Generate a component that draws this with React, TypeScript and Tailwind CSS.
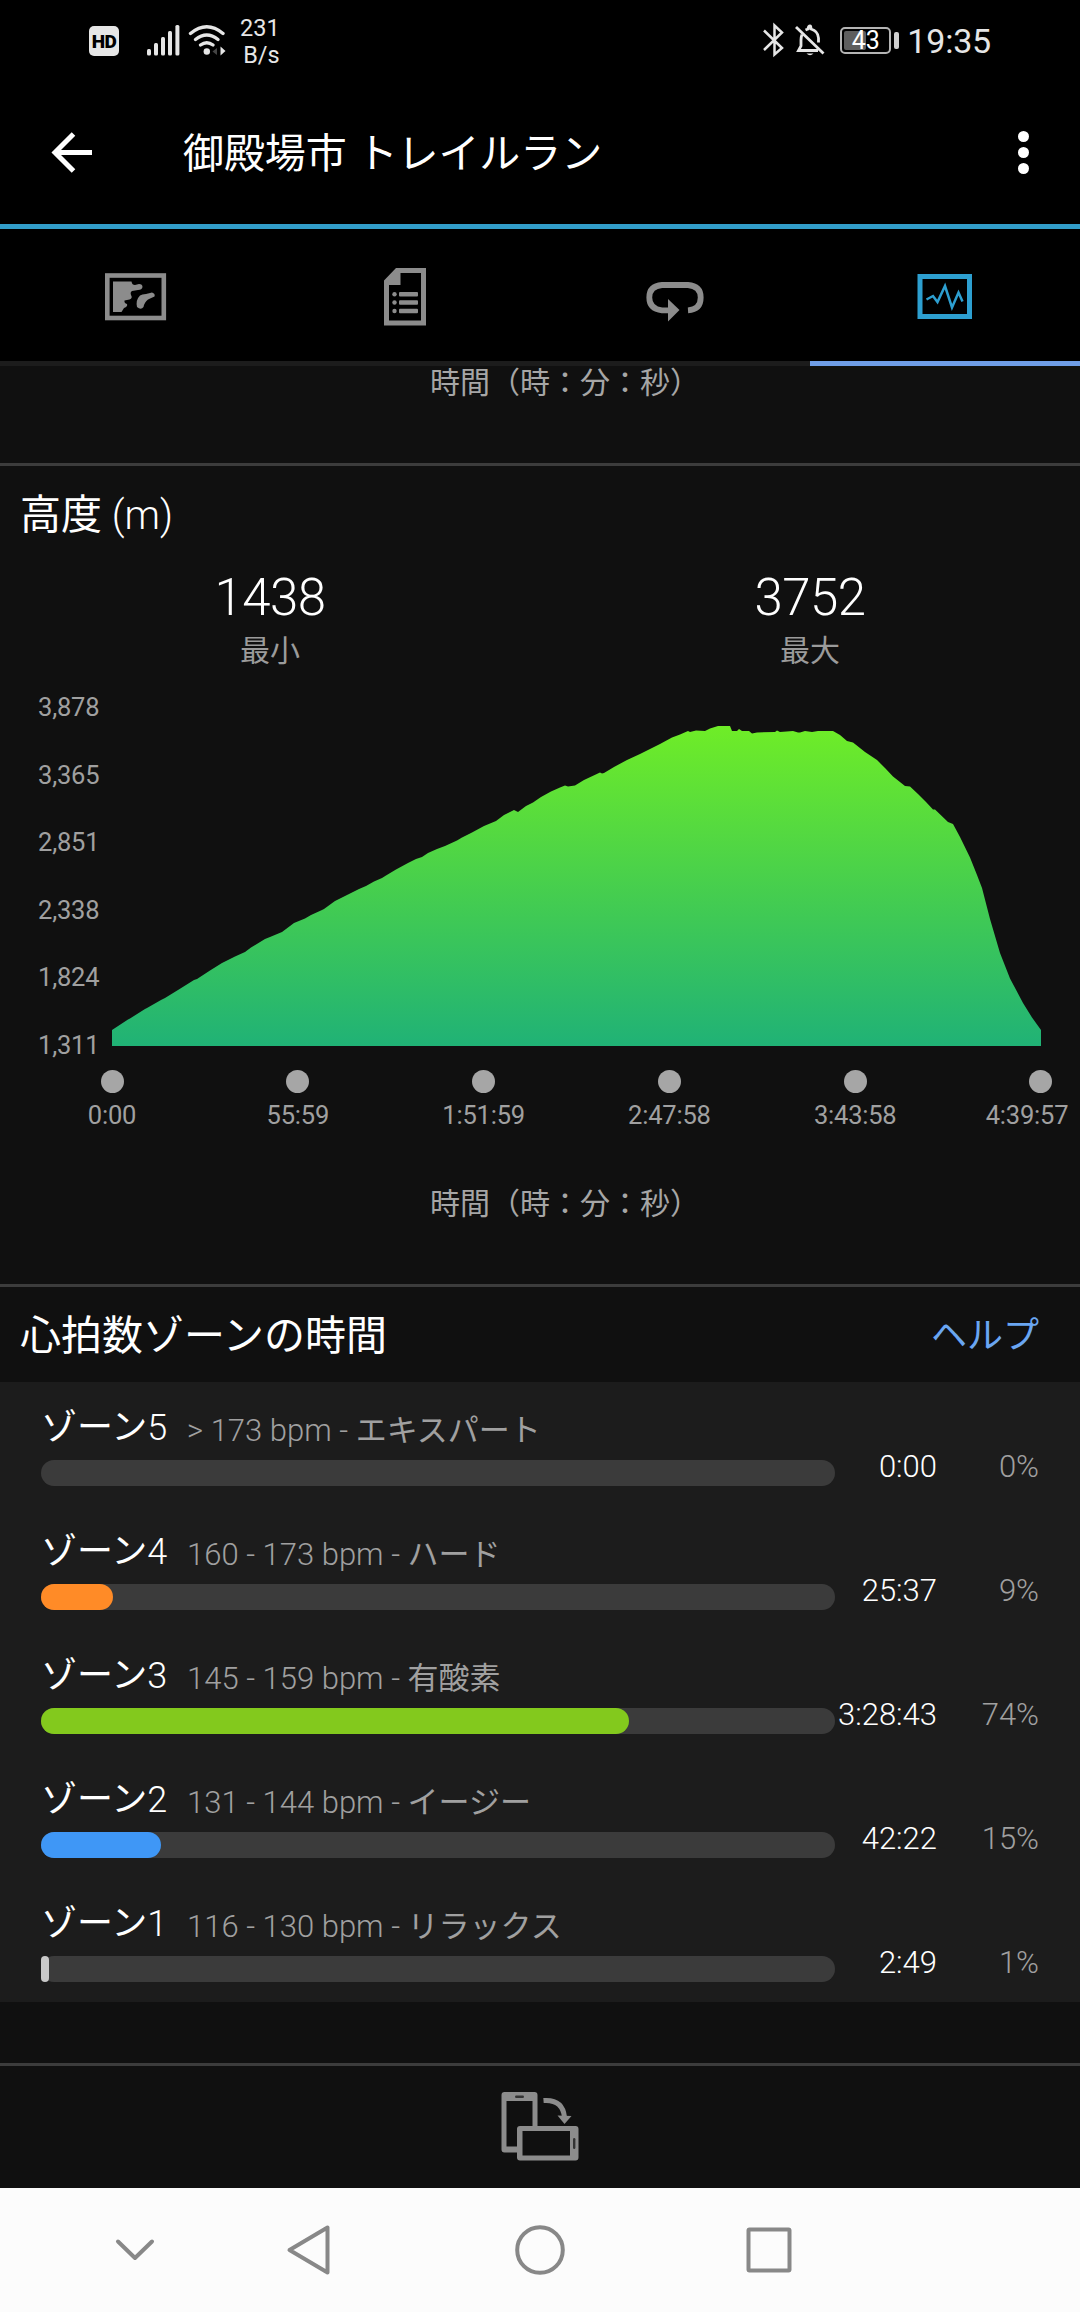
import React from 'react';

const ELEVATION_POINTS = [
  [112, 1030], [128, 1019.5], [130, 1018.5], [145, 1009], [147, 1008], [161, 1000], [165, 998], [178, 990], [194, 980], [197, 979],
  [210, 970.5], [222, 963], [235, 956.5], [245, 952], [251, 947.5], [265, 939], [270, 937], [282, 932],
  [294, 923], [305, 918.5], [311, 915], [322, 910], [324, 909], [335, 901], [348, 894.5], [359, 889], [366, 886], [374, 881.5],
  [382, 878], [386, 875.5], [396, 869.5], [408, 863], [416, 859], [422, 857], [428, 853], [437, 849], [445, 846],
  [457, 840.5], [462, 837.5], [472, 832.5], [484, 826], [496, 821], [504, 815], [514, 810], [518, 812], [526, 806], [533, 802.5], [541, 797], [551, 791.5], [560, 787.5],
  [565, 785.5], [568, 786.5], [575, 785.5], [584, 780], [600, 772.5], [602, 773.5], [604, 773], [614, 767], [627, 760], [640, 754], [660, 744], [672, 737.5], [680, 734.5],
  [688, 731], [690, 732], [696, 730.5], [705, 731], [710, 728.5], [718, 726], [730, 726], [732, 731], [737, 731], [739, 729], [742, 731], [749, 731], [752, 733.5], [757, 732.5],
  [775, 732], [777, 730.5], [780, 732], [793, 731], [798, 732.5], [800, 732.5], [805, 731], [812, 732], [818, 731], [833, 731], [840, 735], [847, 741], [853, 742.5], [865, 752], [877, 760], [885, 768], [893, 776.5],
  [905, 786], [910, 786.5], [918, 794], [926, 802], [933, 809.5], [935, 809.5], [948, 822], [953, 824], [960, 837], [970, 857.5], [977, 875], [982, 888], [990, 919],
  [1000, 953], [1010, 978.5], [1023, 1003], [1032, 1017.5], [1041, 1030],
];

const yLabels = ['3,878', '3,365', '2,851', '2,338', '1,824', '1,311'];
const xLabels = ['0:00', '55:59', '1:51:59', '2:47:58', '3:43:58', '4:39:57'];

const zones = [
  { id: 5, range: '> 173 bpm', level: 'エキスパート', time: '0:00', percent: 0, width: 0, color: '' },
  { id: 4, range: '160 - 173 bpm', level: 'ハード', time: '25:37', percent: 9, width: 72, color: 'bg-[#ff8b27] rounded-full' },
  { id: 3, range: '145 - 159 bpm', level: '有酸素', time: '3:28:43', percent: 74, width: 588, color: 'bg-[#83c91d] rounded-full' },
  { id: 2, range: '131 - 144 bpm', level: 'イージー', time: '42:22', percent: 15, width: 120, color: 'bg-[#3f97f6] rounded-full' },
  { id: 1, range: '116 - 130 bpm', level: 'リラックス', time: '2:49', percent: 1, width: 8, color: 'bg-[#c8c8c8] rounded-[4px]' },
];

const StatusBar = () => (
  <div className="h-[81px] flex items-start justify-between pl-[89px] pr-[89px] text-[#e6e6e6]">
    <div className="flex">
      <div className="mt-[26px] w-[30px] h-[30px] rounded-[5px] bg-[#e6e6e6] text-black text-[19px] leading-[31px] font-black text-center tracking-[-0.5px]">
        HD
      </div>
      <svg className="ml-[28px] mt-[24px]" width="34" height="34" viewBox="147 24 34 34" fill="#e6e6e6">
        <rect x="147" y="49" width="4" height="6.5" rx="1.5" />
        <rect x="154" y="43" width="4" height="12.5" rx="1.5" />
        <rect x="161" y="37" width="4" height="18.5" rx="1.5" />
        <rect x="168" y="31" width="4" height="24.5" rx="1.5" />
        <rect x="175.4" y="25" width="4" height="30.5" rx="1.5" />
      </svg>
      <svg className="ml-[7px] mt-[22px]" width="40" height="36" viewBox="188 22 40 36" fill="none" stroke="#e6e6e6" strokeWidth="3.4" strokeLinecap="round">
        <path d="M190.5 33.5Q206.8 20 223 33.5" />
        <path d="M195.5 39.5Q206.8 30.5 218 39.5" />
        <path d="M200.5 45Q206.8 40.3 213 45" />
        <circle cx="206.8" cy="51.5" r="3.2" fill="#e6e6e6" stroke="none" />
        <path d="M217 48V55L212.5 51.5Z" fill="#444" stroke="none" />
        <path d="M220.5 46.5V55.5L225.5 51Z" fill="#e6e6e6" stroke="none" />
      </svg>
      <div className="ml-[12px] mt-[15px] flex flex-col text-[23.5px] leading-[27px] text-right">
        <span>231</span>
        <span>B/s</span>
      </div>
    </div>
    <div className="flex">
      <svg className="mt-[22px]" width="24" height="36" viewBox="762 22 24 36" fill="none" stroke="#e6e6e6" strokeWidth="2.5">
        <path d="M764 30.5L782 48L774.5 54.5V25.5L782 32.5L764 50" />
      </svg>
      <svg className="ml-[8px] mt-[22px]" width="32" height="36" viewBox="794 22 32 36" fill="none" stroke="#e6e6e6" strokeWidth="2.8">
        <path d="M796 27L823.5 53.5" />
        <path d="M818.5 42.5V38Q818 31 811 29Q811 26 810 26Q808.5 26 808 29L805.5 30" />
        <path d="M802 34.5Q801 37 801 40V46L798.5 50.5H818" />
        <path d="M806.5 53.5Q810 57 813.5 53.5Z" fill="#e6e6e6" stroke="none" />
      </svg>
      <div className="ml-[14px] mt-[27px] w-[51px] h-[27px] rounded-[5px] border-2 border-[#b4b4b4] p-[2px] relative">
        <div className="w-[22px] h-full bg-[#5e5e5e] rounded-[2px]" />
        <span className="absolute inset-0 text-center text-[25px] leading-[24px] text-white">43</span>
      </div>
      <div className="ml-[3px] mt-[32px] w-[5px] h-[17px] rounded-[2px] bg-[#d0d0d0]" />
      <span className="ml-[8px] mt-[22px] text-[34px] leading-[38px] tracking-[-0.2px]">19:35</span>
    </div>
  </div>
);

const Header = () => (
  <div className="h-[148px] border-b-[5px] border-[#329dc9] flex items-center pl-[51px] pr-[51px]">
    <svg className="-mt-px" width="42" height="44" viewBox="51 130 42 44" fill="none" stroke="#fff" strokeWidth="5">
      <path d="M92 152.5H55" />
      <path d="M73.5 134L55 152.5L73.5 171" />
    </svg>
    <h1 className="ml-[90px] pt-[3px] text-[41px] leading-[50px] tracking-[-0.1px] text-white">御殿場市 トレイルラン</h1>
    <div className="ml-auto flex flex-col gap-[5px]">
      <div className="w-[11px] h-[11px] rounded-full bg-white" />
      <div className="w-[11px] h-[11px] rounded-full bg-white" />
      <div className="w-[11px] h-[11px] rounded-full bg-white" />
    </div>
  </div>
);

const Tabs = () => (
  <div className="grid grid-cols-4 h-[137px]">
    <div className="flex justify-center border-b-[5px] border-[#1c1c1c]">
      <svg className="mt-[35px]" width="68" height="66" viewBox="101 264 68 66" fill="#8c8c8c">
        <rect x="107.3" y="275.5" width="56.5" height="42.5" fill="none" stroke="#8c8c8c" strokeWidth="4.6" />
        <path d="M113 281.5H131.5Q132 285 135 285L139 284Q142.5 284 142.5 287Q142 290 138 290L132 291Q130 292 131 295Q133 298 129.5 299.5L124.5 300.5Q124 303 127 304Q128 306.5 124 308L121.5 312H113Z" />
        <path d="M137 307Q135.5 300 140 295.5Q142 294 146 294L152 292.5Q155.5 293.5 154.5 296.5L148 299.5Q144.5 302 143.5 307Q141 310.5 137 307Z" />
      </svg>
    </div>
    <div className="flex justify-center border-b-[5px] border-[#1c1c1c]">
      <svg className="mt-[35px]" width="50" height="66" viewBox="380 264 50 66" fill="#8c8c8c">
        <path fillRule="evenodd" d="M396 268H426V325.5H384V280.5ZM400.5 273V285H389V320.5H421V273Z" />
        <rect x="399" y="292" width="19" height="4.4" rx="1" />
        <rect x="399" y="300.3" width="19" height="4.4" rx="1" />
        <rect x="399" y="308.8" width="19" height="4.4" rx="1" />
        <circle cx="394.5" cy="294.2" r="2.2" />
        <circle cx="394.5" cy="302.5" r="2.2" />
        <circle cx="394.5" cy="311" r="2.2" />
      </svg>
    </div>
    <div className="flex justify-center border-b-[5px] border-[#1c1c1c]">
      <svg className="mt-[35px]" width="68" height="66" viewBox="641 264 68 66" fill="none" stroke="#8c8c8c" strokeWidth="5.8">
        <path d="M670 310.3H662Q649.3 309 649.3 297.5Q649.3 286 662 285H688Q700.7 286 700.7 297.5Q700.7 309.5 688 310.3" />
        <path d="M668 299V321.5L679.5 310Z" fill="#8c8c8c" stroke="none" />
      </svg>
    </div>
    <div className="flex justify-center border-b-[5px] border-[#6f9de6]">
      <svg className="mt-[35px]" width="68" height="66" viewBox="911 264 68 66" fill="none" stroke="#2d9fd0">
        <rect x="920" y="276.5" width="49.5" height="40" strokeWidth="5" />
        <path d="M926.5 299.5L933 296L937.5 302L945 286L952 307.5L958.5 292.5L962.5 301.5" strokeWidth="2.5" />
      </svg>
    </div>
  </div>
);

const AxisTitle = () => (
  <p className="pl-[430px] text-[30px] leading-[40px] text-[#a6a6a6]">時間（時：分：秒）</p>
);

const Stat = ({ value, label }: { value: string; label: string }) => (
  <div className="w-1/2 flex flex-col items-center gap-[3px]">
    <span className="text-[51px] leading-[60px] tracking-[-0.6px] font-light text-white">{value}</span>
    <span className="text-[30px] leading-[40px] text-[#9b9b9b]">{label}</span>
  </div>
);

const ElevationSection = () => {
  const area = `M${ELEVATION_POINTS.map((p) => p.join(' ')).join('L')}V1046H112Z`;

  return (
    <section className="h-[821px] border-b-[3px] border-[#3c3c3c]">
      <h2 className="pt-[29px] pl-[20px] text-[40px] leading-[41px] font-light text-white">
        <span className="font-normal text-[41px]">高度</span> (m)
      </h2>
      <div className="flex mt-[32px]">
        <Stat value="1438" label="最小" />
        <Stat value="3752" label="最大" />
      </div>

      <div className="flex mt-[23px] h-[364px]">
        <div className="w-[112px] pl-[38px] flex flex-col justify-between text-[25.5px] leading-[26px] tracking-[-0.2px] text-[#a0a0a0]">
          {yLabels.map((label) => (
            <span key={label}>{label}</span>
          ))}
        </div>
        <svg className="mt-[26px]" width="929" height="326" viewBox="112 720 929 326">
          <defs>
            <linearGradient id="elevation" gradientUnits="userSpaceOnUse" x1="0" y1="725" x2="0" y2="1046">
              <stop offset="0" stopColor="#6fed27" />
              <stop offset="0.5" stopColor="#47cf4d" />
              <stop offset="1" stopColor="#20b276" />
            </linearGradient>
          </defs>
          <path d={area} fill="url(#elevation)" />
        </svg>
      </div>

      <div className="flex justify-between mt-[12px] ml-[112px] w-[929px] text-[25.5px] leading-[26px] tracking-[-0.2px] text-[#a0a0a0]">
        {xLabels.map((label) => (
          <div key={label} className="w-0 flex flex-col items-center gap-[9px] whitespace-nowrap last:[&>span]:-ml-[28px]">
            <div className="w-[23px] h-[23px] shrink-0 rounded-full bg-[#a6a6a6]" />
            <span>{label}</span>
          </div>
        ))}
      </div>
      <div className="mt-[56px]">
        <AxisTitle />
      </div>
    </section>
  );
};

const ZoneSection = () => (
  <section>
    <div className="h-[95px] pt-[2px] pl-[20px] pr-[41px] flex items-center justify-between">
      <h2 className="text-[41px] leading-[50px] text-white">心拍数ゾーンの時間</h2>
      <a className="text-[36px] leading-[50px] text-[#6aa6f2]">ヘルプ</a>
    </div>
    <div className="bg-[#1c1c1c]">
      {zones.map((zone) => (
        <div key={zone.id} className="h-[124px] pl-[41px] pr-[41px] flex">
          <div className="w-[794px] pt-[26px]">
            <div className="h-[40px] flex leading-[40px] whitespace-nowrap">
              <span className="w-[146px] text-[36px] text-white">
                ゾーン<span className="font-light">{zone.id}</span>
              </span>
              <span className="pt-[3px] text-[31px] text-[#a0a0a0]">
                <span className="font-light">{zone.range} - </span>
                {zone.level}
              </span>
            </div>
            <div className="mt-[12px] h-[26px] rounded-full bg-[#3b3b3b]">
              <div className={`h-full ${zone.color}`} style={{ width: zone.width }} />
            </div>
          </div>
          <span className="w-[102px] pt-[65px] text-[31px] leading-[40px] font-light text-right text-white">{zone.time}</span>
          <span className="flex-1 pt-[65px] text-[31px] leading-[40px] font-light text-right text-[#a0a0a0]">{zone.percent}%</span>
        </div>
      ))}
    </div>
  </section>
);

const RotateBar = () => (
  <div className="mt-[61px] h-[125px] border-t-[3px] border-[#3c3c3c] flex justify-center">
    <svg className="mt-[20px]" width="80" height="80" viewBox="500 2086 80 80" fill="#8c8c8c">
      <path fillRule="evenodd" d="M504.5 2092H534.5Q537.5 2092 537.5 2095V2127H532.5V2101H506.5V2146.5H519V2152.5H504.5Q501.5 2152.5 501.5 2149.5V2095Q501.5 2092 504.5 2092Z" />
      <rect x="515" y="2095.5" width="9" height="2.4" rx="1.2" fill="#333" />
      <path fillRule="evenodd" d="M520 2126H575.5Q578.5 2126 578.5 2129V2157.5Q578.5 2160.5 575.5 2160.5H520Q517 2160.5 517 2157.5V2129Q517 2126 520 2126ZM522.5 2131V2155.5H570V2131Z" />
      <rect x="573" y="2138" width="2.4" height="11" rx="1.2" fill="#333" />
      <path d="M543.5 2100.5Q562.5 2099 564.5 2117" fill="none" stroke="#8c8c8c" strokeWidth="5" />
      <path d="M557.5 2115.5L571.5 2116L564.5 2124Z" />
    </svg>
  </div>
);

const NavBar = () => (
  <div className="h-[124px] bg-[#fcfcfc]">
    <svg width="1080" height="124" viewBox="0 2188 1080 124" fill="none" stroke="#888" strokeWidth="4" strokeLinejoin="round" strokeLinecap="round">
      <path d="M118 2241.5L135 2258L152 2241.5" />
      <path d="M327.5 2227.5V2272.5L289.5 2250Z" />
      <circle cx="540" cy="2250" r="22.8" />
      <rect x="748.5" y="2229.5" width="41" height="41" rx="1" />
    </svg>
  </div>
);

export default function App() {
  return (
    <div lang="ja" className="w-[1080px] h-[2312px] overflow-hidden bg-[#101010] font-[Roboto,'Noto_Sans_CJK_JP',sans-serif]">
      <div className="bg-black">
        <StatusBar />
        <Header />
        <Tabs />
      </div>
      {/* tail of the previous chart, scrolled under the tabs */}
      <div className="h-[103px] border-b-[3px] border-[#3c3c3c] -mt-[3px]">
        <AxisTitle />
      </div>
      <ElevationSection />
      <ZoneSection />
      <RotateBar />
      <NavBar />
    </div>
  );
}
